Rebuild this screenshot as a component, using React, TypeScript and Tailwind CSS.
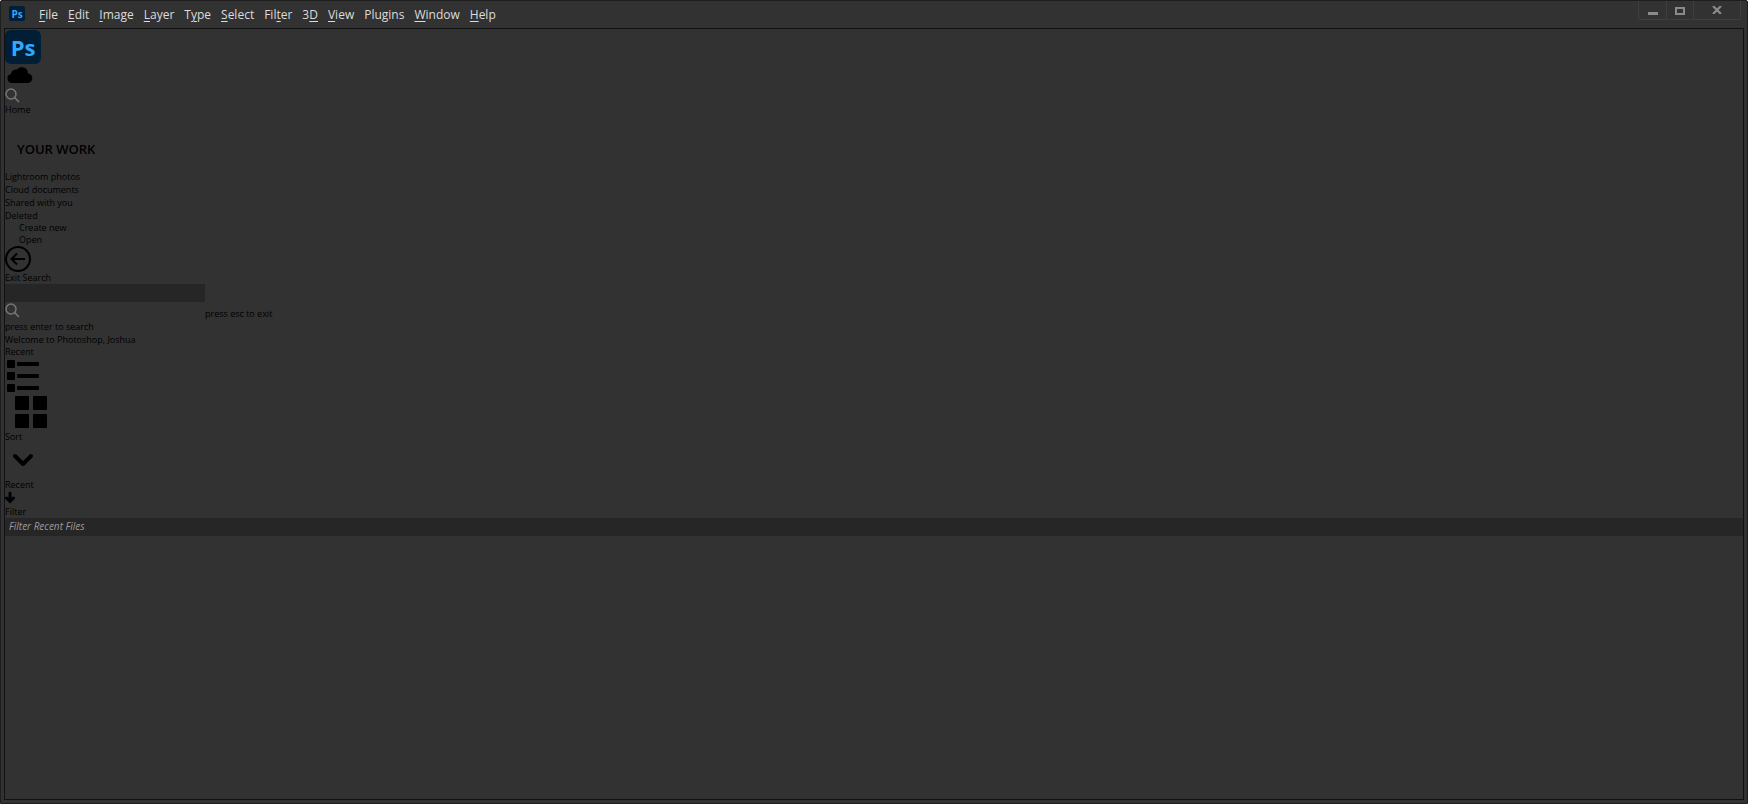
import type { ReactNode } from "react";

const menus: [string, string, string][] = [
  ["", "F", "ile"],
  ["", "E", "dit"],
  ["", "I", "mage"],
  ["", "L", "ayer"],
  ["T", "y", "pe"],
  ["", "S", "elect"],
  ["Fil", "t", "er"],
  ["3", "D", ""],
  ["", "V", "iew"],
  ["Plugins", "", ""],
  ["", "W", "indow"],
  ["", "H", "elp"],
];

function PsLogo({ className, textClass }: { className: string; textClass: string }) {
  return (
    <div className={`flex shrink-0 items-center justify-center bg-[#001e36] font-bold text-[#31a8ff] ${className}`}>
      <span className={textClass}>Ps</span>
    </div>
  );
}

function SearchIcon() {
  return (
    <svg width="15" height="15" viewBox="0 0 15 15" fill="none" stroke="#777" strokeWidth="1.5" aria-hidden="true">
      <circle cx="6" cy="6" r="5" />
      <path d="M9.6 9.6 14 14" />
    </svg>
  );
}

function ControlButton({ label, className, children }: { label: string; className: string; children: ReactNode }) {
  return (
    <button aria-label={label} className={`flex h-full items-center justify-center border-r border-[#3e3e3e] ${className}`}>
      {children}
    </button>
  );
}

function TitleBar() {
  return (
    <header className="flex h-[27px] items-start justify-between pr-[3px] pl-[5px]">
      <div className="flex items-start gap-[14px]">
        <PsLogo className="mt-[5px] h-[15px] w-4 rounded-xs" textClass="text-[10px] leading-3" />
        <nav className="mt-[3px] flex gap-[10px] text-xs leading-[22px] text-[#dcdcdc]">
          {menus.map(([before, key, after]) => (
            <button key={before + key + after}>
              {before}
              <span className="underline underline-offset-2">{key}</span>
              {after}
            </button>
          ))}
        </nav>
      </div>
      <div className="flex h-[19px] rounded-b-xs border-b border-l border-[#3e3e3e]">
        <ControlButton label="Minimize" className="w-7">
          <svg width="10" height="9" viewBox="0 0 10 9" aria-hidden="true">
            <path d="M0 6h10v3H0z" fill="#8a8a8a" />
          </svg>
        </ControlButton>
        <ControlButton label="Maximize" className="w-[27px]">
          <svg width="10" height="8" viewBox="0 0 10 8" className="mt-px" aria-hidden="true">
            <path d="M1 1h8v6H1z" fill="none" stroke="#8a8a8a" strokeWidth="2" />
          </svg>
        </ControlButton>
        <ControlButton label="Close" className="w-[47px] rounded-br-xs">
          <svg width="10" height="8" viewBox="0 0 10 8" aria-hidden="true">
            <path d="M1 0 9 8M9 0 1 8" stroke="#8a8a8a" strokeWidth="2.2" />
          </svg>
        </ControlButton>
      </div>
    </header>
  );
}

export default function App() {
  return (
    <div className="flex min-h-screen flex-col rounded-t-xs border border-[#1e1e1e] bg-[#323232] px-[3px] pb-[3px] font-['Open_Sans','Segoe_UI',sans-serif]">
      <TitleBar />
      <main className="flex grow flex-col items-start border border-[#111] text-[9px] leading-[13px] text-black">
        <PsLogo className="mt-px h-[34px] w-9 rounded-md" textClass="text-[22px] leading-8" />
        <svg width="30" height="22" viewBox="0 0 30 22" aria-hidden="true">
          <path d="M7 19a4.5 4.5 0 0 1-1-8.9 5 5 0 0 1 6-4.6 6.200 6.200 0 0 1 11 4 4.800 4.800 0 0 1 .3 9.500z" />
        </svg>
        <button aria-label="Search" className="mt-[2px]">
          <SearchIcon />
        </button>
        <a href="#home">Home</a>
        <h2 className="mt-[23px] ml-3 text-[13px] leading-5 font-semibold">YOUR WORK</h2>
        <nav className="mt-[11px] flex flex-col items-start">
          <a href="#lightroom">Lightroom photos</a>
          <a href="#cloud">Cloud documents</a>
          <a href="#shared">Shared with you</a>
          <a href="#deleted">Deleted</a>
        </nav>
        <div className="flex flex-col items-start pl-[14px] leading-3">
          <button>Create new</button>
          <button>Open</button>
        </div>
        <button className="flex flex-col items-start leading-3">
          <svg width="26" height="26" viewBox="0 0 26 26" fill="none" stroke="#000" strokeWidth="2" aria-hidden="true">
            <circle cx="13" cy="13" r="12" />
            <path d="M20 13H7M12 7.500 6.500 13l5.500 5.500" />
          </svg>
          Exit Search
        </button>
        <input aria-label="Search" className="h-[18px] w-[200px] bg-[#262626] px-1 text-white outline-none" />
        <div className="flex h-[18px] items-end">
          <div className="flex h-full w-[200px] items-start pt-px">
            <SearchIcon />
          </div>
          <span>press esc to exit</span>
        </div>
        <p>press enter to search</p>
        <p>Welcome to Photoshop, Joshua</p>
        <p className="leading-3">Recent</p>
        <button aria-label="List view">
          <svg width="36" height="36" viewBox="0 0 36 36" aria-hidden="true">
            <rect x="2" y="2" width="8" height="8" rx="1" />
            <rect x="2" y="14" width="8" height="8" rx="1" />
            <rect x="2" y="26" width="8" height="8" rx="1" />
            <rect x="12" y="4" width="22" height="4" rx="1" />
            <rect x="12" y="16" width="22" height="4" rx="1" />
            <rect x="12" y="28" width="22" height="4" rx="1" />
          </svg>
        </button>
        <button aria-label="Grid view" className="ml-2">
          <svg width="36" height="36" viewBox="0 0 36 36" aria-hidden="true">
            <rect x="2" y="2" width="14" height="14" rx="1" />
            <rect x="20" y="2" width="14" height="14" rx="1" />
            <rect x="2" y="20" width="14" height="14" rx="1" />
            <rect x="20" y="20" width="14" height="14" rx="1" />
          </svg>
        </button>
        <p>Sort</p>
        <button className="flex flex-col items-start">
          <svg width="36" height="35" viewBox="0 0 36 35" fill="none" stroke="#000" strokeWidth="4" strokeLinecap="round" strokeLinejoin="round" aria-hidden="true">
            <path d="M10 13l8 8 8-8" />
          </svg>
          Recent
        </button>
        <button aria-label="Sort direction">
          <svg width="10" height="15" viewBox="0 0 10 15" fill="none" stroke="#000" strokeWidth="3" strokeLinecap="round" aria-hidden="true">
            <path d="M5 2v8M1.500 7 5 10.500 8.500 7" />
          </svg>
        </button>
        <label htmlFor="filter" className="leading-3">Filter</label>
        <input
          id="filter"
          placeholder="Filter Recent Files"
          className="h-[18px] w-full bg-[#262626] px-1 pb-[2px] text-[10px] text-white outline-none placeholder:text-[#9a9a9a] placeholder:italic"
        />
      </main>
    </div>
  );
}
